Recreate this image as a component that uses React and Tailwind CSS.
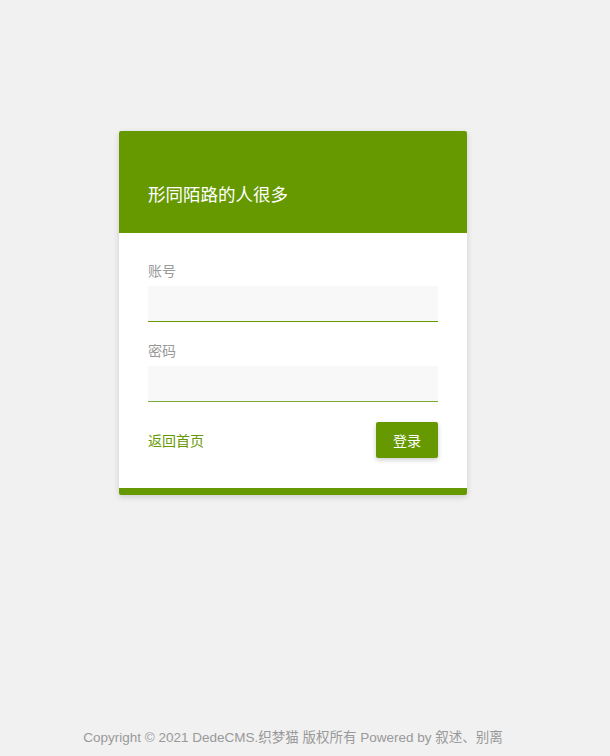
export default function App() {
  return (
    <div
      className="min-h-screen bg-[#f1f1f1] flex flex-col pr-[24px]"
      style={{ fontFamily: '"Liberation Sans", "Noto Sans CJK SC", sans-serif' }}
    >
      <div className="flex-1 flex justify-center pt-[131px]">
        <div className="w-[348px] h-fit rounded-[2px] overflow-hidden bg-white shadow-[0_2px_6px_rgba(0,0,0,0.15)] border-b-[7px] border-[#669900]">
          <div className="bg-[#669900] pt-[50px] pb-[26px] px-[29px]">
            <h1 className="text-white text-[17.5px] leading-[26px] font-normal" style={{ fontFamily: '"Noto Sans CJK SC", sans-serif' }}>
              形同陌路的人很多
            </h1>
          </div>
          <div className="px-[29px] pt-[27px] pb-[30px]" style={{ fontFamily: '"Noto Sans CJK SC", sans-serif' }}>
            <label className="block text-[14px] leading-[20px] text-[#999]">账号</label>
            <div className="mt-[6px] flex flex-col">
              <input className="block w-full h-[35px] bg-[#f8f8f8] border-0 outline-none px-2" />
              <div className="h-[1px] bg-[#669900]" />
            </div>
            <label className="block mt-[18px] text-[14px] leading-[20px] text-[#999]">密码</label>
            <div className="mt-[6px] flex flex-col">
              <input type="password" className="block w-full h-[35px] bg-[#f8f8f8] border-0 outline-none px-2" />
              <div className="h-[1px] bg-[#7aab38]" />
            </div>
            <div className="mt-[20px] flex items-center justify-between">
              <a className="text-[14px] text-[#669900] mt-[1px]">返回首页</a>
              <button className="w-[62px] h-[36px] bg-[#669900] text-white text-[14px] rounded-[2px] shadow-[0_2px_5px_rgba(0,0,0,0.2)]">
                登录
              </button>
            </div>
          </div>
        </div>
      </div>
      <div className="text-center text-[13.5px] leading-[20px] text-[#999] pb-[8px]">
        Copyright © 2021 DedeCMS.织梦猫 版权所有 Powered by 叙述、别离
      </div>
    </div>
  );
}
